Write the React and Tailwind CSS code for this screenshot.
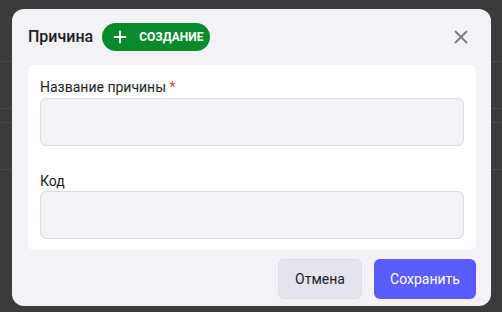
import React from "react";

export default function App() {
  return (
    <div className="relative w-[502px] h-[312px] bg-[#3b3b3b] overflow-hidden" style={{ fontFamily: "Roboto, 'Liberation Sans', sans-serif" }}>
      <div className="absolute left-0 right-0 top-[61px] h-px bg-[#4a4a4a]" />
      <div className="absolute left-0 right-0 top-[108px] h-px bg-[#4a4a4a]" />
      <div className="absolute left-0 right-0 top-[122px] h-px bg-[#4a4a4a]" />
      <div className="absolute left-0 right-0 top-[169px] h-px bg-[#4a4a4a]" />
      <div className="absolute left-[12px] top-[9px] w-[479px] h-[297px] rounded-[12px] bg-[#f2f2f7] flex flex-col px-4">
        <div className="h-14 flex items-center">
          <span className="text-[16px] font-medium text-[#1c1c1e]">Причина</span>
          <span className="ml-[9px] h-7 rounded-full bg-[#078a2b] flex items-center pl-[11px] pr-[7px] text-white">
            <svg width="14" height="14" viewBox="0 0 14 14" fill="none" stroke="white" strokeWidth="2" strokeLinecap="round">
              <path d="M7 1.5v11M1.5 7h11" />
            </svg>
            <span className="ml-[12px] text-[12px] font-bold">СОЗДАНИЕ</span>
          </span>
          <svg className="ml-auto mr-[7px]" width="14" height="14" viewBox="0 0 14 14" fill="none" stroke="#7c7c8e" strokeWidth="2">
            <path d="M1 1l12 12M13 1L1 13" />
          </svg>
        </div>
        <div className="w-[448px] bg-white rounded-[6px] px-3 pt-[12px] pb-[11px]">
          <div className="text-[14px] leading-[20px] text-[#1c1c1e] h-[21px]">
            Название причины <span className="text-[#ff3b30]">*</span>
          </div>
          <div className="h-12 rounded-[6px] bg-[#f2f2f7] border border-[#dcdce6]" />
          <div className="text-[14px] leading-[20px] text-[#1c1c1e] h-[20px] mt-[25px]">Код</div>
          <div className="h-12 rounded-[6px] bg-[#f2f2f7] border border-[#dcdce6]" />
        </div>
        <div className="flex justify-end gap-3 mt-[9px] w-[448px]">
          <button className="w-[84px] h-10 rounded-[6px] bg-[#e4e4ee] border border-[#dadae4] text-[14px] text-[#1c1c1e]">Отмена</button>
          <button className="w-[102px] h-10 rounded-[6px] bg-[#5a5cff] text-[14px] text-white">Сохранить</button>
        </div>
      </div>
    </div>
  );
}
